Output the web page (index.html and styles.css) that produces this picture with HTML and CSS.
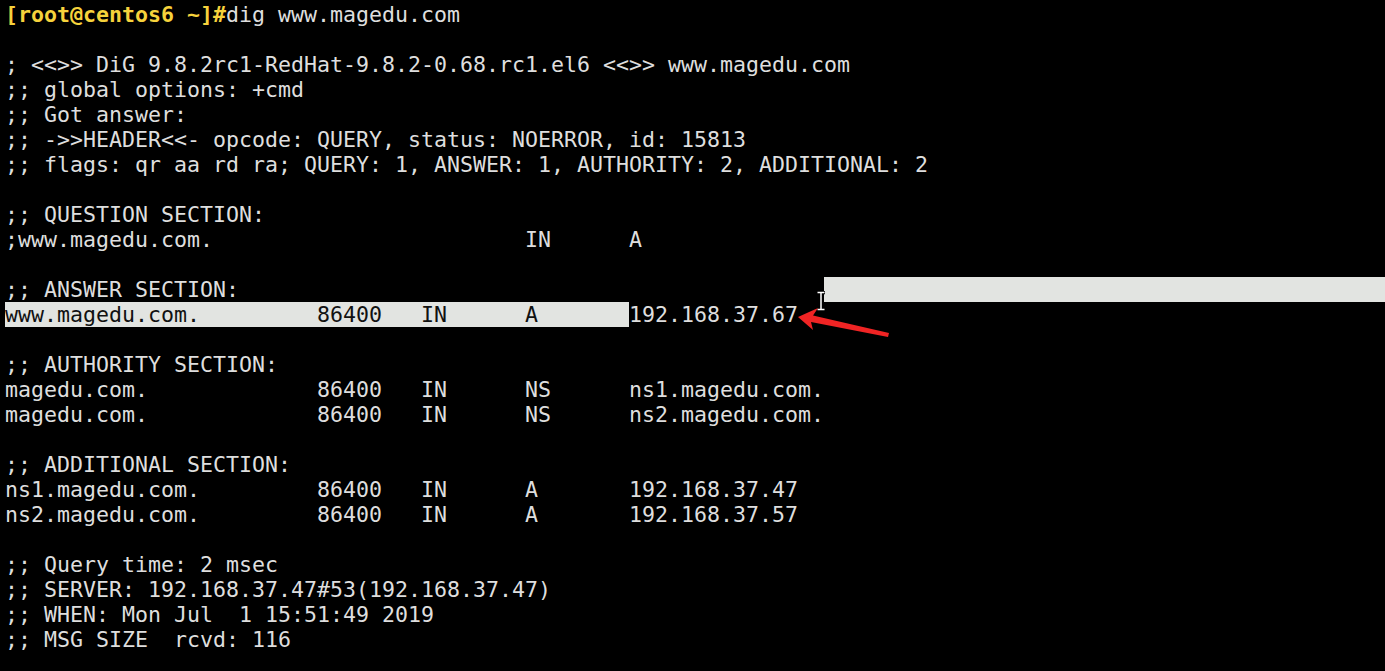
FILE: index.html
```html
<!DOCTYPE html>
<html>
<head>
<meta charset="utf-8">
<link rel="stylesheet" href="styles.css">
</head>
<body>
<pre class="term"><span class="prompt">[root@centos6 ~]#</span>dig www.magedu.com

; &lt;&lt;&gt;&gt; DiG 9.8.2rc1-RedHat-9.8.2-0.68.rc1.el6 &lt;&lt;&gt;&gt; www.magedu.com
;; global options: +cmd
;; Got answer:
;; -&gt;&gt;HEADER&lt;&lt;- opcode: QUERY, status: NOERROR, id: 15813
;; flags: qr aa rd ra; QUERY: 1, ANSWER: 1, AUTHORITY: 2, ADDITIONAL: 2

;; QUESTION SECTION:
;www.magedu.com.                        IN      A

;; ANSWER SECTION:                                             <span class="sel sel-tail"></span>
<span class="sel">www.magedu.com.         86400   IN      A       </span>192.168.37.67

;; AUTHORITY SECTION:
magedu.com.             86400   IN      NS      ns1.magedu.com.
magedu.com.             86400   IN      NS      ns2.magedu.com.

;; ADDITIONAL SECTION:
ns1.magedu.com.         86400   IN      A       192.168.37.47
ns2.magedu.com.         86400   IN      A       192.168.37.57

;; Query time: 2 msec
;; SERVER: 192.168.37.47#53(192.168.37.47)
;; WHEN: Mon Jul  1 15:51:49 2019
;; MSG SIZE  rcvd: 116
</pre>
<svg class="ibeam" width="12" height="20" viewBox="0 0 12 20">
  <path d="M2 1.5 H10 M6 1.5 V18.5 M2 18.5 H10" stroke="#000" stroke-width="3.5" fill="none"/>
  <path d="M2.5 1.5 H9.5 M6 1.5 V18.5 M2.5 18.5 H9.5" stroke="#fff" stroke-width="1.5" fill="none"/>
</svg>
<svg class="arrow" width="100" height="40" viewBox="795 305 100 40">
  <polygon points="798,317 818,308 813,315.5 889,333 888,337 811,322 813,330" fill="#f02424"/>
</svg>
</body>
</html>
```
FILE: styles.css
```css
html, body {
  margin: 0;
  padding: 0;
  background: #000;
  overflow: hidden;
  width: 1385px;
  height: 671px;
}
body {
  position: relative;
}
.term {
  margin: 0;
  padding: 2px 0 0 5px;
  font-family: "DejaVu Sans Mono", monospace;
  font-size: 21.6px;
  line-height: 25px;
  color: #dedede;
  white-space: pre;
}
.prompt {
  color: #f6d23c;
  font-weight: bold;
}
.sel {
  display: inline-block;
  height: 25px;
  vertical-align: top;
  background: #e2e4e1;
  color: #111;
}
.sel-tail {
  width: 570px;
}
.ibeam {
  position: absolute;
  left: 815px;
  top: 291px;
}
.arrow {
  position: absolute;
  left: 795px;
  top: 305px;
}
```
